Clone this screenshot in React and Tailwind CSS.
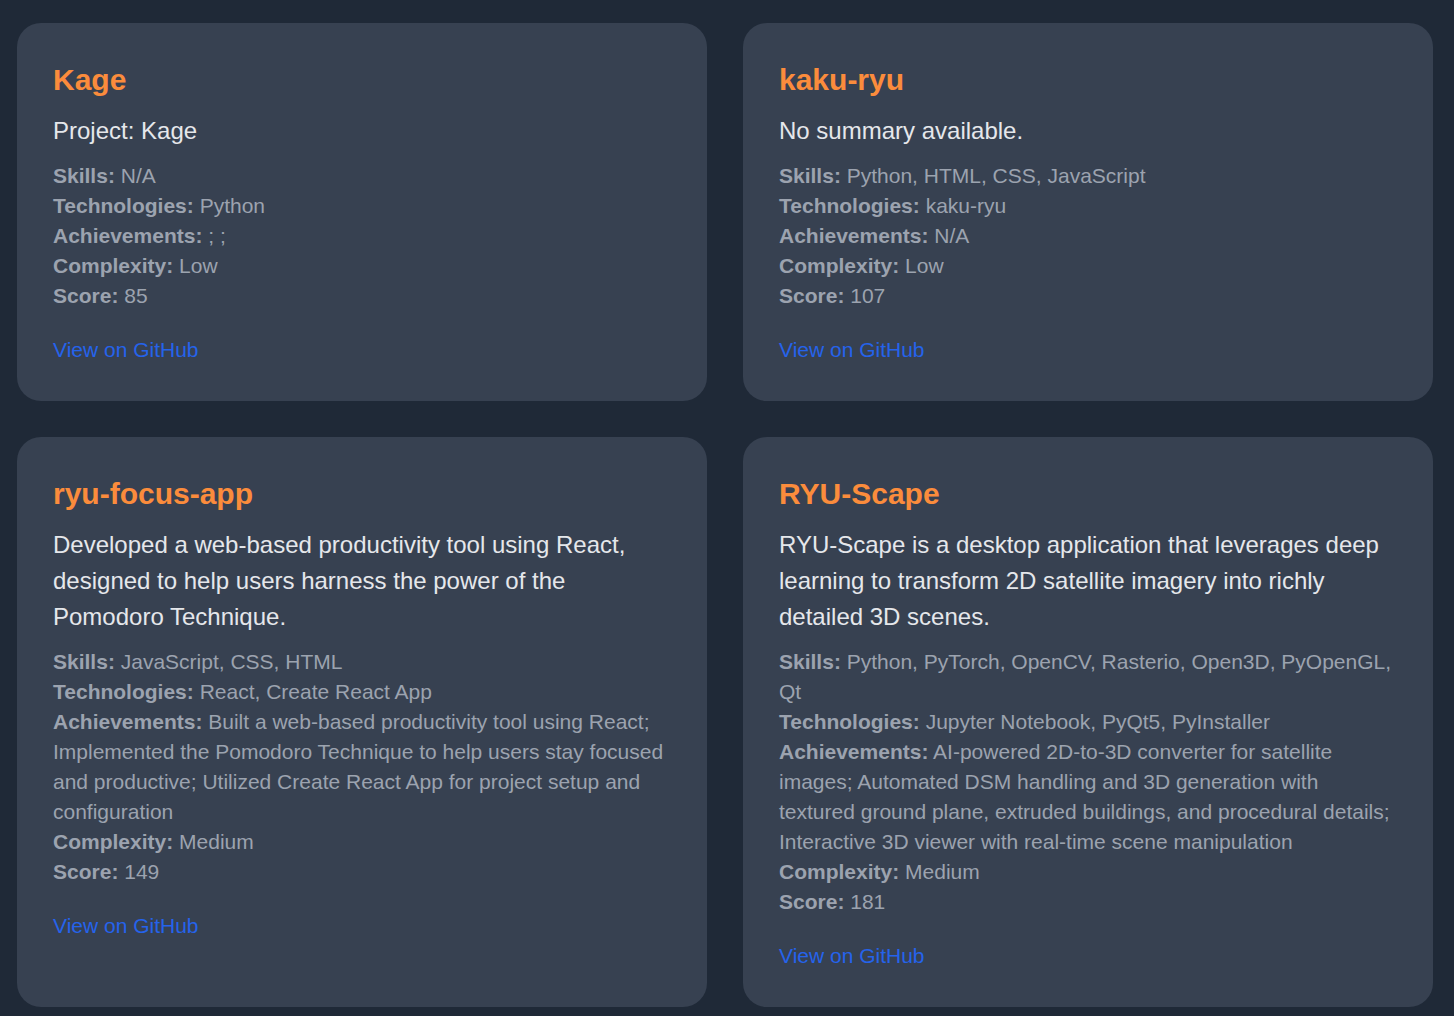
const projects = [
  {
    name: "Kage",
    summary: "Project: Kage",
    skills: "N/A",
    technologies: "Python",
    achievements: "; ;",
    complexity: "Low",
    score: 85,
  },
  {
    name: "kaku-ryu",
    summary: "No summary available.",
    skills: "Python, HTML, CSS, JavaScript",
    technologies: "kaku-ryu",
    achievements: "N/A",
    complexity: "Low",
    score: 107,
  },
  {
    name: "ryu-focus-app",
    summary:
      "Developed a web-based productivity tool using React, designed to help users harness the power of the Pomodoro Technique.",
    skills: "JavaScript, CSS, HTML",
    technologies: "React, Create React App",
    achievements:
      "Built a web-based productivity tool using React; Implemented the Pomodoro Technique to help users stay focused and productive; Utilized Create React App for project setup and configuration",
    complexity: "Medium",
    score: 149,
  },
  {
    name: "RYU-Scape",
    summary:
      "RYU-Scape is a desktop application that leverages deep learning to transform 2D satellite imagery into richly detailed 3D scenes.",
    skills: "Python, PyTorch, OpenCV, Rasterio, Open3D, PyOpenGL, Qt",
    technologies: "Jupyter Notebook, PyQt5, PyInstaller",
    achievements:
      "AI-powered 2D-to-3D converter for satellite images; Automated DSM handling and 3D generation with textured ground plane, extruded buildings, and procedural details; Interactive 3D viewer with real-time scene manipulation",
    complexity: "Medium",
    score: 181,
  },
];

function Detail({ label, value }) {
  return (
    <p>
      <span className="font-bold">{label}:</span> {value}
    </p>
  );
}

function ProjectCard({ project }) {
  return (
    <div className="bg-[#374151] rounded-[24px] p-9">
      {/* Title */}
      <h2 className="text-[30px] leading-[42px] font-bold text-[#fb8c3c]">
        {project.name}
      </h2>
      <p className="mt-3 text-[24px] leading-[36px] text-[#e5e7eb]">
        {project.summary}
      </p>
      {/* Details */}
      <div className="mt-3 text-[21px] leading-[30px] text-[#9ca3af]">
        <Detail label="Skills" value={project.skills} />
        <Detail label="Technologies" value={project.technologies} />
        <Detail label="Achievements" value={project.achievements} />
        <Detail label="Complexity" value={project.complexity} />
        <Detail label="Score" value={project.score} />
      </div>
      <a
        href="#"
        className="inline-block mt-6 text-[21px] leading-[30px] text-[#2563eb] hover:underline"
      >
        View on GitHub
      </a>
    </div>
  );
}

export default function App() {
  return (
    <div
      className="min-h-screen bg-[#1f2937] pt-[23px] pl-[17px] pb-10"
      style={{ fontFamily: '"Liberation Sans", Arial, sans-serif' }}
    >
      <div className="grid grid-cols-[690px_690px] gap-9">
        {projects.map((p) => (
          <ProjectCard key={p.name} project={p} />
        ))}
      </div>
    </div>
  );
}
